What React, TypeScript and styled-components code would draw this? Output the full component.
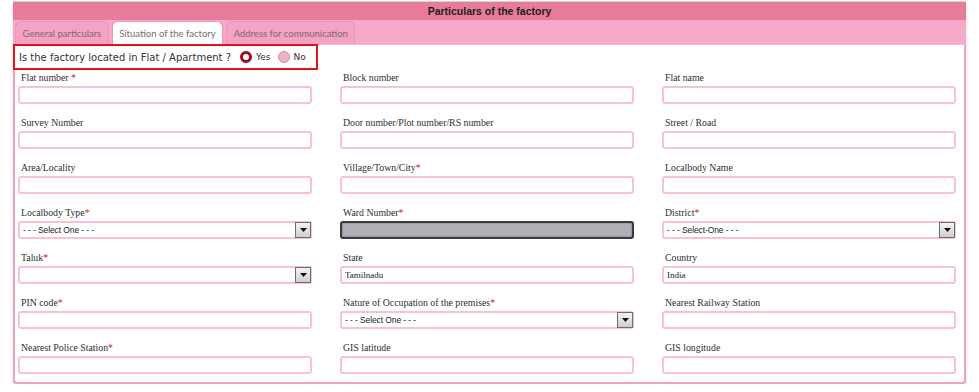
import React from 'react'
import styled, { createGlobalStyle } from 'styled-components'

const GlobalStyle = createGlobalStyle`
  body {
    margin: 0;
    background: #ffffff;
    font-family: 'Liberation Serif', serif;
  }
`

const Panel = styled.div`
  margin: 1px 0 0 13px;
  width: 949px;
  border: 2px solid #eea3bd;
  border-top: none;
  border-radius: 0 0 4px 4px;
  background: #ffffff;
  box-shadow: 0 2px 3px rgba(0, 0, 0, 0.18);
  padding-bottom: 8px;
`

const Header = styled.div`
  height: 19px;
  margin: 0 -2px;
  background: #e67c98;
  border-top: 1px solid #d6d0d3;
  box-sizing: border-box;
  display: flex;
  align-items: center;
  justify-content: center;
  font-family: 'Liberation Sans', sans-serif;
  font-weight: bold;
  font-size: 10.5px;
  color: #1e1e1e;
`

const TabBar = styled.div`
  height: 25px;
  margin: 0 -2px;
  padding: 2px 0 0 2px;
  box-sizing: border-box;
  background: #f6a9cb;
  border-bottom: 1px solid #f4b8d0;
  display: flex;
  align-items: flex-end;
  gap: 3px;
`

const Tab = styled.div<{ $active?: boolean }>`
  height: 22px;
  padding: 0 6.5px;
  display: flex;
  align-items: center;
  border: 1px solid #ea97b5;
  border-bottom: none;
  border-radius: 6px 6px 0 0;
  background: ${(p) => (p.$active ? '#ffffff' : '#f4a2c5')};
  font-family: Lato, 'Liberation Sans', sans-serif;
  font-size: 9.5px;
  color: #7a6a70;
`

const QuestionBox = styled.div`
  margin: -1px 0 0 -2px;
  width: 305px;
  height: 26px;
  box-sizing: border-box;
  border: 2px solid #e3121b;
  display: flex;
  align-items: center;
  padding-left: 4px;
  gap: 4px;
  white-space: nowrap;
  font-family: 'DejaVu Sans', sans-serif;
  font-size: 10px;
  color: #333333;
`

const Question = styled.span`
  margin-right: 5px;
  flex-shrink: 0;
`

const Radio = styled.span<{ $checked?: boolean }>`
  width: 12px;
  height: 12px;
  flex-shrink: 0;
  box-sizing: border-box;
  border-radius: 50%;
  background: ${(p) => (p.$checked ? '#ffffff' : '#e9b4c4')};
  border: ${(p) => (p.$checked ? '3px solid #9e0b1e' : '1px solid #d48aa0')};
`

const RadioLabel = styled.span`
  font-size: 9px;
  margin-right: 3px;
`

const Grid = styled.div`
  display: grid;
  grid-template-columns: repeat(3, 294px);
  column-gap: 28px;
  row-gap: 12px;
  padding: 1px 0 0 3px;
`

const Field = styled.div`
  display: flex;
  flex-direction: column;
`

const Label = styled.label`
  height: 14px;
  line-height: 14px;
  margin: 0 0 1px 3px;
  font-family: 'Liberation Serif', serif;
  font-size: 9.8px;
  color: #2e2e2e;
`

const Req = styled.span`
  color: #e3121b;
`

const Input = styled.div<{ $disabled?: boolean }>`
  height: 18px;
  box-sizing: border-box;
  border: 2px solid ${(p) => (p.$disabled ? '#3a3a3a' : '#fac0db')};
  border-radius: 3px;
  background: ${(p) => (p.$disabled ? '#b0b1b8' : '#ffffff')};
  box-shadow: ${(p) => (p.$disabled ? 'inset 0 0 2px #666' : 'none')};
  display: flex;
  align-items: center;
  padding-left: 3px;
  font-family: 'Liberation Serif', serif;
  font-size: 9px;
  color: #222222;
`

const SelectBox = styled(Input)`
  justify-content: space-between;
  padding-right: 0;
  font-family: 'Liberation Sans Narrow', 'Liberation Sans', sans-serif;
  font-size: 8.5px;
  letter-spacing: -0.1px;
`

const ArrowButton = styled.span`
  width: 16px;
  height: 16px;
  margin-right: -1px;
  box-sizing: border-box;
  border: 1px solid #6d6d6d;
  background: linear-gradient(#f3f3f3, #cfcfcf);
  display: flex;
  align-items: center;
  justify-content: center;
`

type FieldDef = {
  label: string
  required?: boolean
  kind?: 'select' | 'disabled'
  value?: string
}

const fields: FieldDef[] = [
  { label: 'Flat number ', required: true },
  { label: 'Block number' },
  { label: 'Flat name' },
  { label: 'Survey Number' },
  { label: 'Door number/Plot number/RS number' },
  { label: 'Street / Road' },
  { label: 'Area/Locality' },
  { label: 'Village/Town/City', required: true },
  { label: 'Localbody Name' },
  { label: 'Localbody Type', required: true, kind: 'select', value: '- - - Select One - - -' },
  { label: 'Ward Number', required: true, kind: 'disabled' },
  { label: 'District', required: true, kind: 'select', value: '- - - Select-One - - -' },
  { label: 'Taluk', required: true, kind: 'select', value: '' },
  { label: 'State', value: 'Tamilnadu' },
  { label: 'Country', value: 'India' },
  { label: 'PIN code', required: true },
  { label: 'Nature of Occupation of the premises', required: true, kind: 'select', value: '- - - Select One - - -' },
  { label: 'Nearest Railway Station' },
  { label: 'Nearest Police Station', required: true },
  { label: 'GIS latitude' },
  { label: 'GIS longitude' },
]

const Arrow = () => (
  <ArrowButton>
    <svg width="7" height="4" viewBox="0 0 7 4">
      <path d="M0 0 H7 L3.5 4 Z" fill="#111" />
    </svg>
  </ArrowButton>
)

const App: React.FC = () => {
  return (
    <>
      <GlobalStyle />
      <Panel>
        <Header>Particulars of the factory</Header>
        <TabBar>
          <Tab>General particulars</Tab>
          <Tab $active>Situation of the factory</Tab>
          <Tab>Address for communication</Tab>
        </TabBar>
        <QuestionBox>
          <Question>Is the factory located in Flat / Apartment ?</Question>
          <Radio $checked />
          <RadioLabel>Yes</RadioLabel>
          <Radio />
          <RadioLabel>No</RadioLabel>
        </QuestionBox>
        <Grid>
          {fields.map((f) => (
            <Field key={f.label}>
              <Label>
                {f.label}
                {f.required && <Req>*</Req>}
              </Label>
              {f.kind === 'select' ? (
                <SelectBox>
                  <span>{f.value}</span>
                  <Arrow />
                </SelectBox>
              ) : (
                <Input $disabled={f.kind === 'disabled'}>{f.value}</Input>
              )}
            </Field>
          ))}
        </Grid>
      </Panel>
    </>
  )
}

export default App
